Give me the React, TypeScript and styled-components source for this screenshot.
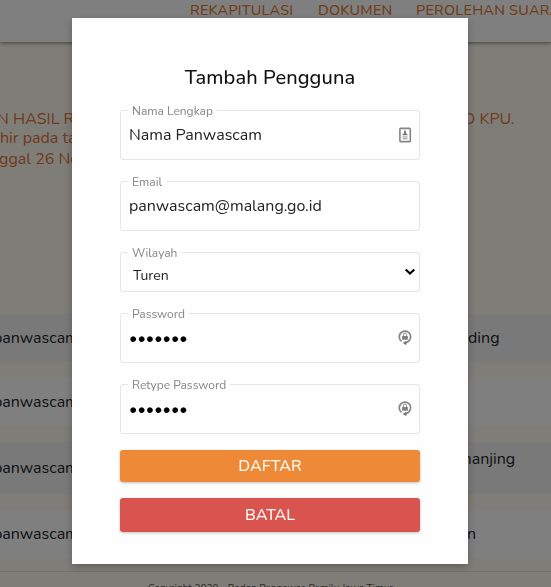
import React from "react";
import styled, { createGlobalStyle } from "styled-components";

const Global = createGlobalStyle`
  * { box-sizing: border-box; }
  html, body { margin: 0; height: 100%; overflow: hidden; }
  body { font-family: Nunito, Lato, sans-serif; font-size: 16px; background: #fffbef; }
`;

const Page = styled.div`
  width: 551px;
  height: 587px;
  overflow: hidden;
  background: #fffbee;
  display: flex;
  flex-direction: column;
`;

const Header = styled.header`
  flex: none;
  height: 42px;
  background: #fff;
  box-shadow: 0 1px 4px rgba(0, 0, 0, 0.5);
  padding-left: 190px;
  display: flex;
  color: #e07a30;
  font-size: 14.4px;
  font-weight: 500;
  line-height: 21px;
  white-space: nowrap;
`;

const NavLink = styled.a<{ $w: number }>`
  flex: none;
  width: ${(p) => p.$w}px;
  letter-spacing: 0.25px;
`;

const Notice = styled.section`
  flex: none;
  height: 272px;
  padding-top: 67px;
  color: #e0733c;
  overflow: hidden;
`;

const NoticeLine = styled.div<{ $h: number; $x: number }>`
  height: ${(p) => p.$h}px;
  line-height: 20px;
  margin-left: ${(p) => p.$x}px;
  display: flex;
  white-space: pre;
`;

const NoticeStart = styled.span`
  flex: 0 0 466px;
`;

const Rows = styled.div`
  display: flex;
  flex-direction: column;
  gap: 16px;
`;

const Row = styled.div<{ $odd?: boolean; $h?: number }>`
  flex: none;
  height: ${(p) => p.$h ?? 48}px;
  background: ${(p) => (p.$odd ? "#f3f3f4" : "#fff")};
  display: flex;
  align-items: center;
  color: #212529;
`;

const UserCell = styled.span`
  flex: none;
  width: 474px;
  margin-left: -7px;
`;

const AreaCell = styled.span<{ $shift: number; $raise?: boolean }>`
  margin-left: ${(p) => p.$shift}px;
  padding-bottom: ${(p) => (p.$raise ? 18 : 0)}px;
`;

const Footer = styled.footer`
  flex: none;
  margin-top: 13px;
  border-top: 1px solid #e6e2d8;
  padding: 9px 10px 0 0;
  height: 30px;
  text-align: center;
  font-size: 10px;
  line-height: 14px;
  color: #55534f;
`;

const Overlay = styled.div`
  position: fixed;
  inset: 0;
  background: rgba(0, 0, 0, 0.5);
  padding: 18px 0 0 72px;
`;

const Modal = styled.form`
  width: 396px;
  height: 546px;
  background: #fefefe;
  padding: 48px;
  box-shadow: 0 3px 8px rgba(0, 0, 0, 0.25);
  display: flex;
  flex-direction: column;
`;

const Title = styled.h1`
  flex: none;
  margin: 0;
  height: 37px;
  text-align: center;
  font-size: 20px;
  font-weight: 500;
  line-height: 24px;
  color: #111;
  letter-spacing: 0.1px;
`;

const Field = styled.fieldset<{ $h?: number }>`
  flex: none;
  height: ${(p) => (p.$h ?? 50) + 7}px;
  margin: 0 0 14px;
  padding: 0;
  border: 1px solid #e6e6e8;
  border-radius: 3px;
  min-width: 0;
`;

const Legend = styled.legend`
  margin-left: 7px;
  padding: 0 4px;
  height: 14px;
  font-size: 12px;
  line-height: 16px;
  color: #858588;
`;

const Control = styled.div<{ $h?: number }>`
  height: ${(p) => p.$h ?? 35}px;
  padding: 0 7px 0 8px;
  display: flex;
  align-items: center;
  justify-content: space-between;
`;

const Input = styled.input`
  width: 240px;
  border: 0;
  padding: 0;
  outline: 0;
  background: transparent;
  font: inherit;
  color: #222224;

  &[type="password"] { color: #000; }
`;

const Chosen = styled.span`
  padding: 2px 0 0 4px;
  font-size: 14px;
  color: #222;
`;

const Button = styled.button<{ $danger?: boolean }>`
  flex: none;
  width: 300px;
  height: ${(p) => (p.$danger ? 34 : 32)}px;
  margin: ${(p) => (p.$danger ? "16px 0 0" : "2px 0 0")};
  padding: 0;
  border: 0;
  border-radius: 3px;
  background: ${(p) => (p.$danger ? "#d9534f" : "#ee8a37")};
  box-shadow: 0 1px 3px rgba(0, 0, 0, 0.25);
  color: #fffaf3;
  font-family: inherit;
  font-size: 16px;
  font-weight: 500;
  line-height: 32px;
`;

const CardIcon = () => (
  <svg width="14" height="16" viewBox="0 0 14 16">
    <rect x="1.9" y="1.4" width="10.4" height="13.2" rx="0.8" fill="#fff" stroke="#858585" strokeWidth="1.6" />
    <path d="M7 3.6c.8 0 1 .7.9 1.5l.1 1.4c1.1.2 1.6.7 1.6 1.7H4.4c0-1 .5-1.5 1.6-1.7l.1-1.4C6 4.3 6.2 3.6 7 3.6Z" fill="#777" />
    <path d="M4.5 9.9h5M4.5 11.7h5" stroke="#aaa" strokeWidth="1.2" />
  </svg>
);

const LockSvg = styled.svg`
  margin-bottom: 2px;
`;

const LockIcon = () => (
  <LockSvg width="14" height="18" viewBox="0 0 14 18">
    <path d="M3.6 13.4A5.7 5.7 0 1 1 10.8 13L7.6 14.9" fill="none" stroke="#858585" strokeWidth="1.7" />
    <path d="M8.3 12.4v4.9L4.8 14.9Z" fill="#777" />
    <rect x="4.1" y="7.9" width="5.8" height="3.8" rx="0.4" fill="#808080" />
    <path d="M5.4 8V6.7a1.6 1.6 0 0 1 3.2 0V8" fill="none" stroke="#8a8a8a" strokeWidth="1" />
  </LockSvg>
);

const ChevronSvg = styled.svg`
  margin: 0 -4px 5px 0;
`;

const Chevron = () => (
  <ChevronSvg width="12" height="8" viewBox="0 0 12 8">
    <path d="M1.7 1.5 6 5.6l4.3-4.1" fill="none" stroke="#000" strokeWidth="2.1" />
  </ChevronSvg>
);

export default function App() {
  return (
    <>
      <Global />
      <Page>
        <Header>
          <NavLink $w={128}>REKAPITULASI</NavLink>
          <NavLink $w={98}>DOKUMEN</NavLink>
          <NavLink $w={150}>PEROLEHAN SUARA</NavLink>
        </Header>
        <Notice>
          <NoticeLine $h={19} $x={-3}>
            <NoticeStart>N HASIL R</NoticeStart>
            <span>O KPU.</span>
          </NoticeLine>
          <NoticeLine $h={21} $x={-8}>khir pada ta</NoticeLine>
          <NoticeLine $h={20} $x={-10}>nggal 26 No</NoticeLine>
        </Notice>
        <Rows>
          <Row $odd>
            <UserCell>panwascam</UserCell>
            <AreaCell $shift={1}>ding</AreaCell>
          </Row>
          <Row>
            <UserCell>panwascam</UserCell>
          </Row>
          <Row $odd $h={52}>
            <UserCell>panwascam</UserCell>
            <AreaCell $shift={-9} $raise>manjing</AreaCell>
          </Row>
          <Row>
            <UserCell>panwascam</UserCell>
            <AreaCell $shift={0}>n</AreaCell>
          </Row>
        </Rows>
        <Footer>Copyright 2020 - Badan Pengawas Pemilu Jawa Timur</Footer>
      </Page>
      <Overlay>
        <Modal>
          <Title>Tambah Pengguna</Title>
          <Field>
            <Legend>Nama Lengkap</Legend>
            <Control><Input defaultValue="Nama Panwascam" /><CardIcon /></Control>
          </Field>
          <Field>
            <Legend>Email</Legend>
            <Control><Input defaultValue="panwascam@malang.go.id" /></Control>
          </Field>
          <Field $h={40}>
            <Legend>Wilayah</Legend>
            <Control $h={31}><Chosen>Turen</Chosen><Chevron /></Control>
          </Field>
          <Field>
            <Legend>Password</Legend>
            <Control><Input type="password" defaultValue="1234567" /><LockIcon /></Control>
          </Field>
          <Field>
            <Legend>Retype Password</Legend>
            <Control><Input type="password" defaultValue="1234567" /><LockIcon /></Control>
          </Field>
          <Button type="button">DAFTAR</Button>
          <Button type="button" $danger>BATAL</Button>
        </Modal>
      </Overlay>
    </>
  );
}
